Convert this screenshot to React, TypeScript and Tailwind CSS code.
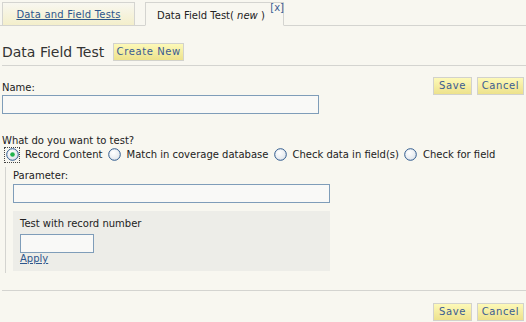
import React from "react";

const font = { fontFamily: '"DejaVu Sans", Verdana, sans-serif' };

function YellowButton({ label, w }: { label: string; w: string }) {
  return (
    <button
      className={`${w} h-[18px] border border-[#d2d2cc] bg-gradient-to-b from-[#fdf9b8] to-[#ede28c] text-[10px] leading-none tracking-[0.6px] text-[#3b5c92]`}
    >
      {label}
    </button>
  );
}

function Radio({ checked }: { checked?: boolean }) {
  return (
    <span className={`inline-flex h-[14px] w-[14px] items-center justify-center ${checked ? "outline outline-1 outline-dotted outline-[#444]" : ""}`}>
      <svg width="13" height="13" viewBox="0 0 13 13">
        <defs>
          <radialGradient id={checked ? "rg1" : "rg0"} cx="0.4" cy="0.35" r="0.7">
            <stop offset="0" stopColor="#ffffff" />
            <stop offset="1" stopColor="#dfe4ea" />
          </radialGradient>
        </defs>
        <circle cx="6.5" cy="6.5" r="5.8" fill={`url(#${checked ? "rg1" : "rg0"})`} stroke="#2f5a8e" strokeWidth="1" />
        {checked && <circle cx="6.5" cy="6.5" r="2.3" fill="#22b24c" />}
      </svg>
    </span>
  );
}

export default function App() {
  return (
    <div className="h-[322px] w-[526px] overflow-hidden bg-[#f8f7f0] text-[10px] text-[#222]" style={font}>
      {/* tabs */}
      <div className="flex items-end gap-[10px] border-b border-[#d4d4d0] pl-[2px] pt-[2px]">
        <div className="-mb-px flex h-[24px] w-[133px] items-center justify-center border border-[#d4d4d0] bg-gradient-to-b from-[#f8f7f0] to-[#f4efcb]">
          <a className="text-[10px] tracking-[0.2px] text-[#2d568c] underline">Data and Field Tests</a>
        </div>
        <div className="relative -mb-px flex h-[24px] w-[139px] items-center border border-b-[#f8f7f0] border-[#d4d4d0] bg-[#f8f7f0] pl-[11px] pt-[3px]">
          <span>
            Data Field Test(<i> new </i>)
          </span>
          <span className="absolute right-[-1px] top-[0px] text-[10px] leading-none text-[#3b5c92]">[x]</span>
        </div>
      </div>

      {/* title */}
      <div className="flex items-center gap-[9px] pl-[2px] pt-[17px]">
        <span className="text-[14px] leading-none text-[#333]">Data Field Test</span>
        <YellowButton label="Create New" w="w-[71px]" />
      </div>
      <div className="ml-[2px] mt-[4px] border-b border-[#d4d4d0]" />

      {/* name */}
      <div className="flex items-end justify-between pl-[2px] pr-[2px] pt-[11px]">
        <span className="mb-[2px] leading-none">Name:</span>
        <div className="flex gap-[5px]">
          <YellowButton label="Save" w="w-[39px]" />
          <YellowButton label="Cancel" w="w-[47px]" />
        </div>
      </div>
      <div className="pl-[2px]">
        <div className="h-[19px] w-[317px] border border-[#7f9db9] bg-[#f9f9f7]" />
      </div>

      {/* test type */}
      <div className="pl-[2px] pt-[22px] leading-none">What do you want to test?</div>
      <div className="flex items-center pl-[5px] pt-[1px]">
        <Radio checked />
        <span className="ml-[6px] mr-[5px]">Record Content</span>
        <Radio />
        <span className="ml-[5px] mr-[5px]">Match in coverage database</span>
        <Radio />
        <span className="ml-[5px] mr-[5px]">Check data in field(s)</span>
        <Radio />
        <span className="ml-[5px]">Check for field</span>
      </div>

      {/* nested */}
      <div className="ml-[5px] mt-[5px] border-l border-[#d4d4d0] pb-[2px] pl-[7px] pt-[4px]">
        <div className="leading-none">Parameter:</div>
        <div className="mt-[3px] h-[19px] w-[317px] border border-[#7f9db9] bg-[#f9f9f7]" />
        <div className="mt-[8px] w-[317px] bg-[#ededE8] pb-[7px] pl-[7px] pt-[8px]">
          <div className="leading-none">Test with record number</div>
          <div className="mt-[5px] h-[19px] w-[74px] border border-[#7f9db9] bg-[#f9f9f7]" />
          <a className="mt-[1px] block leading-none text-[#2d568c] underline">Apply</a>
        </div>
      </div>

      <div className="ml-[2px] mt-[17px] border-b border-[#d4d4d0]" />
      <div className="flex justify-end gap-[5px] pr-[2px] pt-[12px]">
        <YellowButton label="Save" w="w-[39px]" />
        <YellowButton label="Cancel" w="w-[47px]" />
      </div>
    </div>
  );
}
